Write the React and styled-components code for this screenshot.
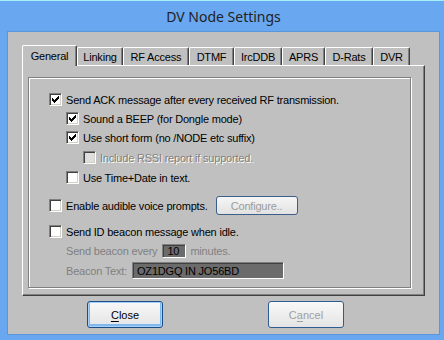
import React from 'react';
import styled, { createGlobalStyle } from 'styled-components';

const Global = createGlobalStyle`
  html, body { margin: 0; padding: 0; background: #69a8f1; }
  body { font-family: "Liberation Sans", Arial, sans-serif; font-size: 11px; letter-spacing: -0.2px; }
  #root { width: 444px; height: 340px; }
`;

const Window = styled.div`
  width: 444px;
  height: 340px;
  box-sizing: border-box;
  background: #69a8f1;
  border-top: 1px solid #a4eef6;
  display: flex;
  flex-direction: column;
  padding: 0 4px 5px 7px;
  overflow: hidden;
`;

const TitleBar = styled.div`
  height: 30px;
  flex: none;
  display: flex;
  align-items: center;
  justify-content: center;
  padding-top: 1px;
  box-sizing: border-box;
  font-family: "Noto Sans", sans-serif;
  font-size: 14px;
  letter-spacing: 0;
  color: #222;
`;

const Client = styled.div`
  flex: 1;
  border: 1px solid #5b96da;
  background: #c0c0c0;
  display: flex;
  flex-direction: column;
  padding: 13px 0 0 14px;
`;

const TabStrip = styled.div`
  display: flex;
  align-items: flex-end;
  height: 20px;
  position: relative;
  z-index: 1;
`;

const Tab = styled.div`
  box-sizing: border-box;
  width: ${p => p.$w}px;
  height: ${p => (p.$active ? 21 : 18)}px;
  margin-bottom: ${p => (p.$active ? -1 : 0)}px;
  background: #c0c0c0;
  border-top: 1px solid #fff;
  border-left: 1px solid #fff;
  border-right: 1px solid #404040;
  border-radius: 2px 2px 0 0;
  box-shadow: inset -1px 0 0 #808080;
  display: flex;
  align-items: ${p => (p.$active ? 'flex-start' : 'center')};
  padding-top: ${p => (p.$active ? 4 : 0)}px;
  justify-content: center;
  color: #000;
  font-size: 11px;
  white-space: nowrap;
`;

const Panel = styled.div`
  box-sizing: border-box;
  width: 403px;
  height: 231px;
  border-top: 1px solid #fff;
  border-left: 1px solid #fff;
  border-right: 1px solid #404040;
  border-bottom: 1px solid #404040;
  box-shadow: inset -1px -1px 0 #808080;
  padding: 11px 0 0 5px;
`;

const Frame = styled.div`
  box-sizing: border-box;
  width: 383px;
  height: 211px;
  border: 1px solid #808080;
  box-shadow: 1px 1px 0 #fff, inset 1px 1px 0 #fff;
  padding: 12px 0 0 20px;
  display: flex;
  flex-direction: column;
`;

const Row = styled.div`
  display: flex;
  align-items: center;
  height: 19px;
  margin-top: ${p => p.$mt || 0}px;
  padding-left: ${p => (p.$indent || 0) * 17}px;
`;

const Box = styled.span`
  width: 13px;
  height: 13px;
  box-sizing: border-box;
  flex: none;
  border: 1px solid;
  border-color: #808080 #fff #fff #808080;
  box-shadow: inset 1px 1px 0 #404040, inset -1px -1px 0 #d4d0c8;
  background: ${p => (p.$disabled ? '#dedede' : '#fff')};
  display: flex;
  align-items: center;
  justify-content: center;
  margin-right: 4px;
`;

const Label = styled.span`
  color: ${p => (p.$tone === 'emboss' ? '#808080' : p.$tone === 'dim' ? '#808080' : '#000')};
  text-shadow: ${p => (p.$tone === 'emboss' ? '1px 1px 0 #fff' : 'none')};
  white-space: nowrap;
`;

const Field = styled.span`
  box-sizing: border-box;
  width: ${p => p.$w}px;
  height: ${p => p.$h}px;
  margin: 0 ${p => p.$mr || 0}px 0 ${p => p.$ml || 0}px;
  background: #6b6b6b;
  border: 1px solid;
  border-color: #808080 #fff #fff #808080;
  box-shadow: inset 1px 1px 0 #404040;
  color: #000;
  display: flex;
  align-items: center;
  padding-left: 4px;
  white-space: nowrap;
  font-size: 11px;
`;

const SmallButton = styled.span`
  box-sizing: border-box;
  width: 82px;
  height: 19px;
  margin-left: ${p => p.$ml}px;
  border: 1px solid #3c5f8a;
  border-radius: 3px;
  background: linear-gradient(#f6f6f6, #e2e2e2);
  color: #9c9c9c;
  display: flex;
  align-items: center;
  justify-content: center;
  font-size: 11px;
`;

const ButtonRow = styled.div`
  display: flex;
  margin-top: 5px;
  padding-left: 65px;
  gap: 105px;
`;

const DialogButton = styled.div`
  box-sizing: border-box;
  width: 76px;
  height: 27px;
  border: 1px solid ${p => (p.$default ? '#1b4d86' : '#2f5d90')};
  border-radius: 3px;
  background: linear-gradient(#f8f8f8, #e4e4e4);
  box-shadow: ${p => (p.$default ? 'inset 0 0 0 1px #a7d0f6, inset 0 -1px 0 2px #7fb8ef' : 'none')};
  color: ${p => (p.$disabled ? '#a0a0a0' : '#000')};
  display: flex;
  align-items: center;
  justify-content: center;
  font-size: 11px;
  letter-spacing: 0;
  & u { text-underline-offset: 2px; }
`;

const Check = () => (
  <svg width="7" height="7" viewBox="0 0 7 7" shapeRendering="crispEdges">
    <path d="M6 0h1v3h-1v1h-1v1h-1v1h-1v1h-1v-1h-1v-1h-1v-3h1v1h1v1h1v-1h1v-1h1z" fill="#000" />
  </svg>
);

const CheckRow = ({ indent, mt, checked, disabled, tone, children, extra }) => (
  <Row $indent={indent} $mt={mt}>
    <Box $disabled={disabled}>{checked && <Check />}</Box>
    <Label $tone={tone}>{children}</Label>
    {extra}
  </Row>
);

const tabs = [
  ['General', 55],
  ['Linking', 46],
  ['RF Access', 66],
  ['DTMF', 45],
  ['IrcDDB', 48],
  ['APRS', 43],
  ['D-Rats', 48],
  ['DVR', 37],
];

export default function App() {
  return (
    <>
      <Global />
      <Window>
        <TitleBar>DV Node Settings</TitleBar>
        <Client>
          <TabStrip>
            {tabs.map(([t, w], i) => (
              <Tab key={t} $w={w} $active={i === 0}>{t}</Tab>
            ))}
          </TabStrip>
          <Panel>
            <Frame>
              <CheckRow checked>Send ACK message after every received RF transmission.</CheckRow>
              <CheckRow indent={1} checked>Sound a BEEP (for Dongle mode)</CheckRow>
              <CheckRow indent={1} checked>Use short form (no /NODE etc suffix)</CheckRow>
              <CheckRow indent={2} mt={1} disabled tone="emboss">Include RSSI report if supported.</CheckRow>
              <CheckRow indent={1} mt={1}>Use Time+Date in text.</CheckRow>
              <CheckRow mt={9} extra={<SmallButton $ml={8}>Configure..</SmallButton>}>
                Enable audible voice prompts.
              </CheckRow>
              <CheckRow mt={7}>Send ID beacon message when idle.</CheckRow>
              <Row $indent={1}>
                <Label $tone="dim">Send beacon every</Label>
                <Field $w={24} $h={14} $ml={5} $mr={4}>10</Field>
                <Label $tone="dim">minutes.</Label>
              </Row>
              <Row $indent={1} $mt={1}>
                <Label $tone="dim">Beacon Text:</Label>
                <Field $w={152} $h={17} $ml={5}>OZ1DGQ IN JO56BD</Field>
              </Row>
            </Frame>
          </Panel>
          <ButtonRow>
            <DialogButton $default><span><u>C</u>lose</span></DialogButton>
            <DialogButton $disabled><span>C<u>a</u>ncel</span></DialogButton>
          </ButtonRow>
        </Client>
      </Window>
    </>
  );
}
